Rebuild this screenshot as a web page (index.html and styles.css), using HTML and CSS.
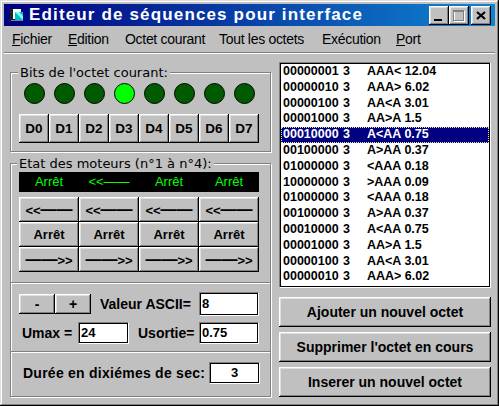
FILE: index.html
```html
<!DOCTYPE html>
<html lang="fr">
<head>
<meta charset="utf-8">
<title>Editeur de séquences pour interface</title>
<link rel="stylesheet" href="styles.css">
</head>
<body>
<div class="window">
  <div class="titlebar">
    <svg class="appicon" viewBox="0 0 16 16" width="16" height="16">
      <rect x="1" y="2" width="4" height="11" fill="#202020"/>
      <rect x="4" y="2" width="8" height="10" fill="#ffffff"/>
      <polygon points="6,5 14,5 14,13 6,13" fill="#00c0c0"/>
      <polygon points="6,5 10,5 14,9 14,13" fill="#80ffff"/>
      <rect x="2" y="13" width="12" height="1" fill="#808080"/>
    </svg>
    <span class="title">Editeur de séquences pour interface</span>
    <div class="tbtns">
      <span class="tbtn"><svg viewBox="0 0 20 19" width="20" height="19"><rect x="5" y="13" width="8" height="2" fill="#000"/></svg></span>
      <span class="tbtn"><svg viewBox="0 0 20 19" width="20" height="19">
        <rect x="5.5" y="5.5" width="10" height="10" fill="none" stroke="#fff"/>
        <rect x="5" y="5" width="10" height="1" fill="#fff"/>
        <rect x="4.5" y="4.5" width="10" height="10" fill="none" stroke="#808080"/>
        <rect x="4" y="4" width="11" height="2" fill="#808080"/>
      </svg></span>
      <span class="tbtn close"><svg viewBox="0 0 20 19" width="20" height="19"><path d="M6 6 L14 13 M14 6 L6 13" stroke="#000" stroke-width="2.2" fill="none"/></svg></span>
    </div>
  </div>
  <div class="menubar">
    <span class="mi m1"><u>F</u>ichier</span>
    <span class="mi m2"><u>E</u>dition</span>
    <span class="mi m3">Octet courant</span>
    <span class="mi m4">Tout les octets</span>
    <span class="mi m5">Exécution</span>
    <span class="mi"><u>P</u>ort</span>
  </div>
  <div class="sep"></div>
  <div class="client">
    <div class="left">
      <fieldset class="group g1">
        <legend class="lg1">Bits de l'octet courant:</legend>
        <div class="gbody b1">
          <div class="leds">
            <span class="led"></span><span class="led"></span><span class="led"></span><span class="led on"></span>
            <span class="led"></span><span class="led"></span><span class="led"></span><span class="led"></span>
          </div>
          <div class="dbtns">
            <span class="btn dbtn">D0</span><span class="btn dbtn">D1</span><span class="btn dbtn">D2</span><span class="btn dbtn">D3</span>
            <span class="btn dbtn">D4</span><span class="btn dbtn">D5</span><span class="btn dbtn">D6</span><span class="btn dbtn">D7</span>
          </div>
        </div>
      </fieldset>
      <fieldset class="group g2">
        <legend class="lg2">Etat des moteurs (n°1 à n°4):</legend>
        <div class="gbody b2">
          <div class="bar">
            <span class="st">Arrêt</span>
            <span class="st">&lt;&lt;<span class="dsh2">——</span></span>
            <span class="st">Arrêt</span>
            <span class="st">Arrêt</span>
          </div>
          <div class="mbtns">
            <span class="btn mbtn"><span>&lt;&lt;<span class="dsh">——</span></span></span>
            <span class="btn mbtn"><span>&lt;&lt;<span class="dsh">——</span></span></span>
            <span class="btn mbtn"><span>&lt;&lt;<span class="dsh">——</span></span></span>
            <span class="btn mbtn"><span>&lt;&lt;<span class="dsh">——</span></span></span>
            <span class="btn mbtn">Arrêt</span>
            <span class="btn mbtn">Arrêt</span>
            <span class="btn mbtn">Arrêt</span>
            <span class="btn mbtn">Arrêt</span>
            <span class="btn mbtn"><span><span class="dsh">——</span>&gt;&gt;</span></span>
            <span class="btn mbtn"><span><span class="dsh">——</span>&gt;&gt;</span></span>
            <span class="btn mbtn"><span><span class="dsh">——</span>&gt;&gt;</span></span>
            <span class="btn mbtn"><span><span class="dsh">——</span>&gt;&gt;</span></span>
          </div>
        </div>
      </fieldset>
      <fieldset class="group g3">
        <div class="gbody b3">
          <div class="row1">
            <span class="btn pm">-</span><span class="btn pm">+</span>
            <span class="lbl lascii">Valeur ASCII=</span>
            <span class="field f60 tall">8</span>
          </div>
          <div class="row2">
            <span class="lbl lumax">Umax =</span>
            <span class="field f51">24</span>
            <span class="lbl lusort">Usortie=</span>
            <span class="field f60">0.75</span>
          </div>
        </div>
      </fieldset>
      <fieldset class="group g4">
        <div class="gbody b4">
          <span class="lbl ldur">Durée en dixiémes de sec:</span>
          <span class="field f51 center">3</span>
        </div>
      </fieldset>
    </div>
    <div class="right">
      <div class="list">
        <div class="row"><span>00000001 </span><span>3  </span><span>AAA&lt; 12.04</span></div>
        <div class="row"><span>00000010 </span><span>3  </span><span>AAA&gt; 6.02</span></div>
        <div class="row"><span>00000100 </span><span>3  </span><span>AA&lt;A 3.01</span></div>
        <div class="row"><span>00001000 </span><span>3  </span><span>AA&gt;A 1.5</span></div>
        <div class="row sel"><span>00010000 </span><span>3  </span><span>A&lt;AA 0.75</span></div>
        <div class="row"><span>00100000 </span><span>3  </span><span>A&gt;AA 0.37</span></div>
        <div class="row"><span>01000000 </span><span>3  </span><span>&lt;AAA 0.18</span></div>
        <div class="row"><span>10000000 </span><span>3  </span><span>&gt;AAA 0.09</span></div>
        <div class="row"><span>01000000 </span><span>3  </span><span>&lt;AAA 0.18</span></div>
        <div class="row"><span>00100000 </span><span>3  </span><span>A&gt;AA 0.37</span></div>
        <div class="row"><span>00010000 </span><span>3  </span><span>A&lt;AA 0.75</span></div>
        <div class="row"><span>00001000 </span><span>3  </span><span>AA&gt;A 1.5</span></div>
        <div class="row"><span>00000100 </span><span>3  </span><span>AA&lt;A 3.01</span></div>
        <div class="row"><span>00000010 </span><span>3  </span><span>AAA&gt; 6.02</span></div>
      </div>
      <div class="actions">
        <span class="btn bigbtn">Ajouter un nouvel octet</span>
        <span class="btn bigbtn">Supprimer l'octet en cours</span>
        <span class="btn bigbtn">Inserer un nouvel octet</span>
      </div>
    </div>
  </div>
</div>
</body>
</html>
```
FILE: styles.css
```css
* { box-sizing: border-box; }
html, body { margin: 0; padding: 0; }
body {
  width: 499px;
  height: 406px;
  overflow: hidden;
  background: #c0c0c0;
  font-family: "Liberation Sans", Arial, sans-serif;
  color: #000;
}
.window {
  width: 499px;
  height: 406px;
  padding: 4px;
  background: #c0c0c0;
  box-shadow: inset -1px -1px #000, inset 1px 1px #dfdfdf, inset -2px -2px #808080, inset 2px 2px #fff;
  display: flex;
  flex-direction: column;
}
.titlebar {
  height: 22px;
  flex: none;
  background: linear-gradient(to right, #000080, #1084d0);
  display: flex;
  align-items: center;
  padding-left: 5px;
  padding-right: 4px;
}
.appicon { flex: none; display: block; }
.title {
  flex: 1;
  margin-left: 4px;
  color: #fff;
  font-weight: bold;
  font-size: 17px;
  letter-spacing: 1.15px;
  line-height: 22px;
  white-space: nowrap;
  overflow: hidden;
}
.tbtns { display: flex; flex: none; }
.tbtn {
  width: 20px;
  height: 19px;
  background: #c0c0c0;
  box-shadow: inset -1px -1px #000, inset 1px 1px #fff, inset -2px -2px #808080, inset 2px 2px #dfdfdf;
  display: block;
}
.tbtn svg { display: block; }
.tbtn.close { margin-left: 2px; }

.menubar {
  height: 26px;
  flex: none;
  display: flex;
  padding-left: 8px;
  font-size: 14px;
  line-height: 26px;
  letter-spacing: -0.3px;
  white-space: nowrap;
}
.mi { flex: none; }
.m1 { width: 56px; }
.m2 { width: 57px; }
.m3 { width: 94px; }
.m4 { width: 103px; }
.m5 { width: 74px; }
.sep {
  height: 2px;
  flex: none;
  border-top: 1px solid #808080;
  border-bottom: 1px solid #fff;
}

.client { display: flex; flex: 1; }
.left {
  width: 261px;
  margin-left: 6px;
  padding-top: 11px;
  display: flex;
  flex-direction: column;
}
.right {
  width: 212px;
  margin-left: 8px;
  padding-top: 8px;
}

.group {
  margin: 0;
  padding: 0;
  min-width: 0;
  border: 1px solid #808080;
  box-shadow: inset 1px 1px #fff, 1px 1px #fff;
}
.group legend {
  font-family: "DejaVu Sans", sans-serif;
  font-size: 13px;
  line-height: 15px;
  padding: 0 2px;
  background: #c0c0c0;
  white-space: nowrap;
}
.lg1 { margin-left: 7px; }
.lg2 { margin-left: 6px; }
.g2 { margin-top: 4px; }
.g3 { margin-top: -1px; }
.g4 { margin-top: -1px; }

.b1 { padding: 3px 0 8px 8px; }
.leds {
  display: grid;
  grid-template-columns: repeat(8, 30px);
  height: 21px;
}
.led {
  width: 21px;
  height: 21px;
  justify-self: center;
  border-radius: 50%;
  background: #005a00;
  border: 1.6px solid #000;
}
.led.on { background: #00ff00; }
.dbtns {
  display: grid;
  grid-template-columns: repeat(8, 30px);
  margin-top: 10px;
}

.btn {
  background: #c0c0c0;
  box-shadow: inset -1px -1px #000, inset 1px 1px #fff, inset -2px -2px #808080, inset 2px 2px #dfdfdf;
  display: flex;
  align-items: center;
  justify-content: center;
  font-weight: bold;
  white-space: nowrap;
}
.dbtn { height: 29px; font-size: 13.5px; }

.b2 { padding: 1px 0 10px 8px; }
.bar {
  width: 240px;
  height: 20px;
  background: #000;
  display: grid;
  grid-template-columns: repeat(4, 60px);
  color: #00ff00;
  font-size: 13px;
  line-height: 20px;
  text-align: center;
  white-space: nowrap;
}
.dsh2 { font-size: 13px; }
.mbtns {
  display: grid;
  grid-template-columns: repeat(4, 60px);
  grid-auto-rows: 25px;
  margin-top: 5px;
}
.mbtn { font-size: 13px; }
.dsh { font-size: 16px; line-height: 1; }

.b3 { padding: 9px 0 7px 8px; }
.row1 {
  display: flex;
  align-items: center;
  width: 240px;
  height: 24px;
}
.row2 {
  display: flex;
  align-items: center;
  width: 240px;
  height: 22px;
  margin-top: 6px;
}
.pm { width: 36px; height: 20px; font-size: 14px; }
.lbl {
  font-weight: bold;
  font-size: 14px;
  white-space: nowrap;
}
.lascii { margin-left: 9px; flex: 1; }
.lumax { margin-left: 3px; width: 56px; }
.lusort { margin-left: 9px; flex: 1; }
.field {
  background: #fff;
  border: 1px solid;
  border-color: #808080 #fff #fff #808080;
  box-shadow: inset 0 0 0 1px #000;
  font-weight: bold;
  font-size: 13px;
  height: 22px;
  line-height: 20px;
  padding-left: 2px;
  white-space: nowrap;
}
.field.tall { height: 24px; line-height: 22px; }
.f60 { width: 60px; }
.f51 { width: 51px; }
.field.center { text-align: center; padding-left: 0; }

.b4 {
  padding: 10px 0 12px 8px;
  display: flex;
  align-items: center;
  width: 249px;
}
.ldur { margin-left: 4px; flex: 1; letter-spacing: 0.25px; }

.list {
  height: 226px;
  background: #fff;
  border: 1px solid;
  border-color: #808080 #fff #fff #808080;
  box-shadow: inset 0 0 0 1px #000;
  padding: 1px;
  overflow: hidden;
}
.row {
  display: grid;
  grid-template-columns: 60px 24px auto;
  height: 15.8px;
  line-height: 15.8px;
  padding-left: 2px;
  font-weight: bold;
  font-size: 12.5px;
  white-space: pre;
}
.row.sel {
  background: #000080;
  color: #fff;
  outline: 1px dotted #e8e890;
  outline-offset: -1px;
}
.actions {
  display: flex;
  flex-direction: column;
  gap: 5px;
  margin-top: 9px;
}
.bigbtn { height: 30px; font-size: 14px; }
```
